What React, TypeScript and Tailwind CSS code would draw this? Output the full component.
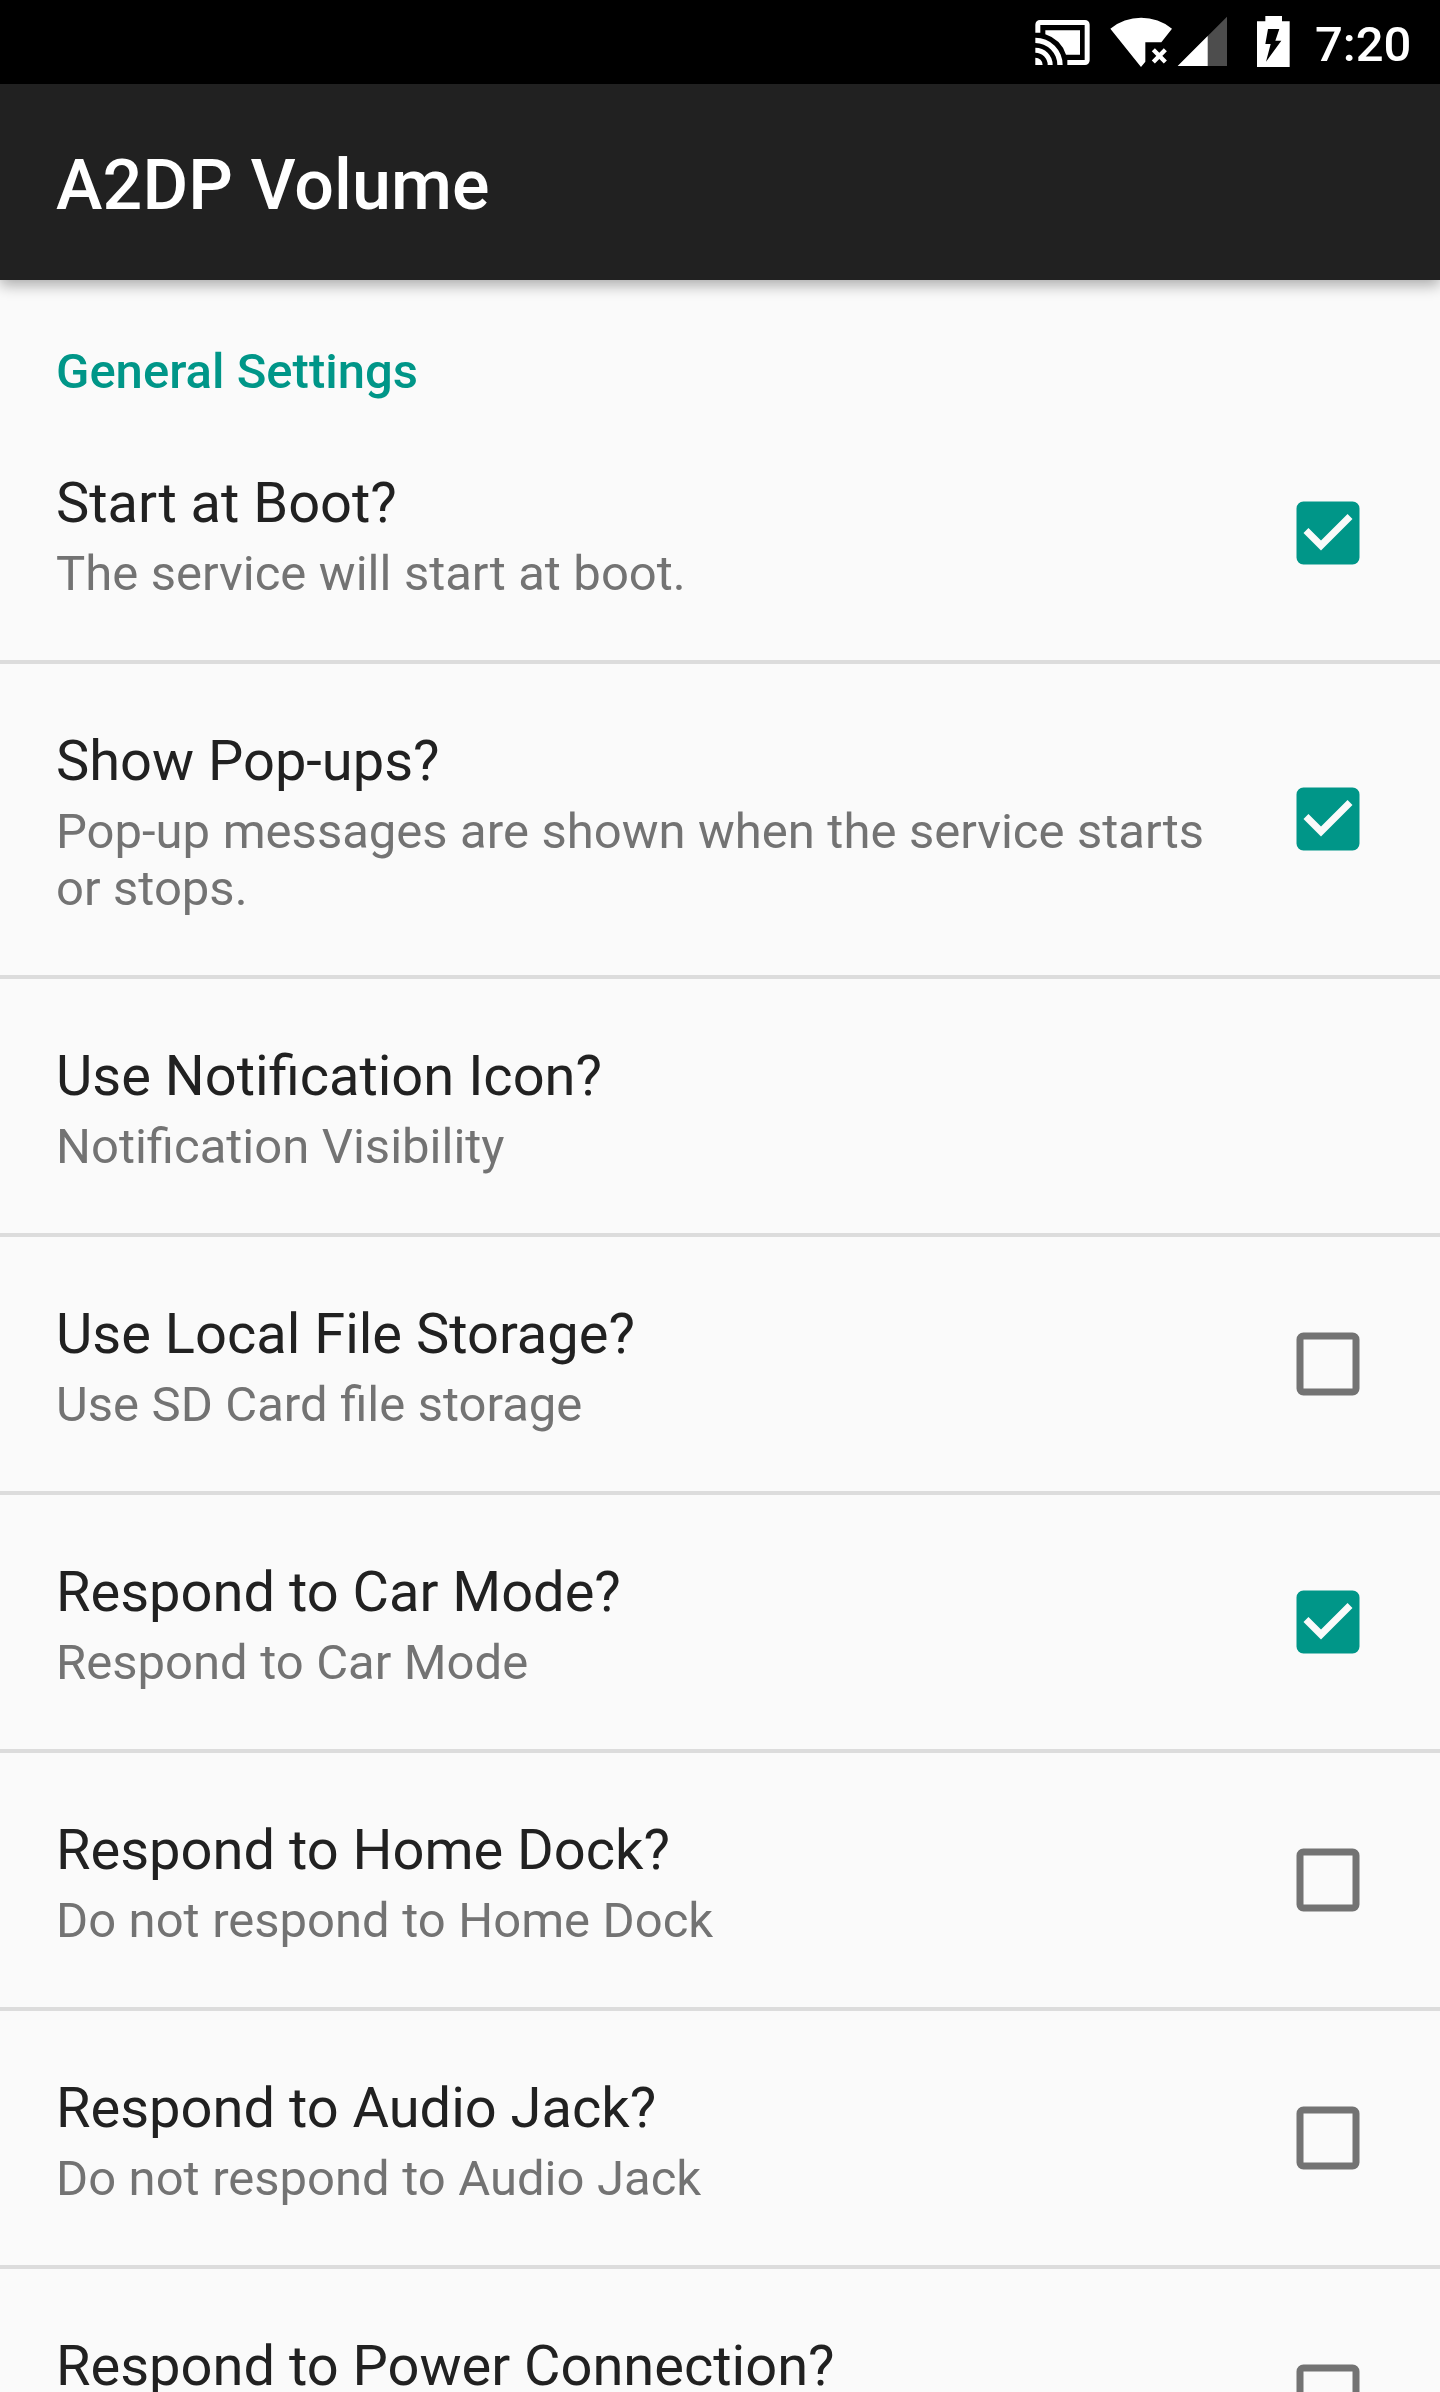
type Setting = { title: string; summary?: string; checked?: boolean };

const settings: Setting[] = [
  { title: "Start at Boot?", summary: "The service will start at boot.", checked: true },
  {
    title: "Show Pop-ups?",
    summary: "Pop-up messages are shown when the service starts or stops.",
    checked: true,
  },
  { title: "Use Notification Icon?", summary: "Notification Visibility" },
  { title: "Use Local File Storage?", summary: "Use SD Card file storage", checked: false },
  { title: "Respond to Car Mode?", summary: "Respond to Car Mode", checked: true },
  { title: "Respond to Home Dock?", summary: "Do not respond to Home Dock", checked: false },
  { title: "Respond to Audio Jack?", summary: "Do not respond to Audio Jack", checked: false },
  { title: "Respond to Power Connection?", checked: false },
];

function CastIcon() {
  return (
    <svg className="mt-5 h-[45px] w-[55px] shrink-0" viewBox="45 60 165 135" fill="#fff">
      <path d="M46 98V74a14 14 0 0 1 14-14h135a14 14 0 0 1 14 14v107a14 14 0 0 1-14 14h-53v-15h52V75H61v23z" />
      <path d="M76 91H180V164H138A97 97 0 0 0 76 103z" />
      <path d="M46 173a22 22 0 0 1 22 22H46z" />
      <path d="M46 143a52 52 0 0 1 52 52H83a37 37 0 0 0-37-37z" />
      <path d="M46 113a82 82 0 0 1 82 82H112a66 66 0 0 0-66-66z" />
    </svg>
  );
}

function WifiOffIcon() {
  return (
    <svg className="ml-5 mt-[17px] h-[51px] w-[63px] shrink-0" viewBox="270 51 189 153" fill="#fff">
      <path d="M363 201L271 86A147 147 0 0 1 456 86L424 127H376V185z" />
      <path d="M400 149L436 186M436 149L400 186" stroke="#fff" strokeWidth="13" />
    </svg>
  );
}

function SignalIcon() {
  return (
    <svg className="ml-1 mt-4 h-[51px] w-[51px] shrink-0" viewBox="471 48 153 153">
      <path d="M473 198L621 50V198z" fill="#4d4d4d" />
      <path d="M473 198L563 108V198z" fill="#fff" />
    </svg>
  );
}

function BatteryIcon() {
  return (
    <svg className="ml-[29px] mt-4 h-[51px] w-[33px] shrink-0" viewBox="111 48 99 153">
      <path d="M111 64H136V48H186V64H209V201H111z" fill="#fff" />
      <path d="M144 87H178L166 122H184L138 185L152 132H136z" fill="#000" />
    </svg>
  );
}

function Checkbox({ checked }: { checked: boolean }) {
  return (
    <svg className="mb-px h-16 w-16 shrink-0" viewBox="2.857 2.857 18.286 18.286">
      {checked ? (
        <path
          fill="#009688"
          d="M19 3H5a2 2 0 0 0-2 2v14a2 2 0 0 0 2 2h14a2 2 0 0 0 2-2V5a2 2 0 0 0-2-2zm-9 14l-5-5 1.41-1.41L10 14.17l7.59-7.59L19 8l-9 9z"
        />
      ) : (
        <path
          fill="#737373"
          d="M19 5v14H5V5h14m0-2H5a2 2 0 0 0-2 2v14a2 2 0 0 0 2 2h14a2 2 0 0 0 2-2V5a2 2 0 0 0-2-2z"
        />
      )}
    </svg>
  );
}

function Row({ title, summary, checked }: Setting) {
  return (
    <li className="flex min-h-[258px] shrink-0 items-center justify-between border-b-4 border-[#dcdcdc] pl-14 pr-20">
      <div className="w-[1184px] self-start pb-[58px] pt-16">
        <div className="whitespace-nowrap text-[56px] leading-[66px] text-[#212121]">{title}</div>
        {summary && (
          <div className="mt-[9px] text-[49px] leading-[57px] text-[#737373] [word-spacing:0.35px]">{summary}</div>
        )}
      </div>
      {checked !== undefined && <Checkbox checked={checked} />}
    </li>
  );
}

export default function App() {
  return (
    <div className="flex h-[2392px] w-[1440px] flex-col overflow-hidden bg-[#fafafa] font-['Roboto',sans-serif]">
      <div className="flex h-[84px] shrink-0 items-start bg-black pl-[1035px]">
        <CastIcon />
        <WifiOffIcon />
        <SignalIcon />
        <BatteryIcon />
        <span className="ml-[25px] mt-4 text-[49px] font-medium leading-[58px] text-white">7:20</span>
      </div>
      <header className="h-[196px] shrink-0 bg-[#212121] pl-14 pt-[60px] shadow-[0_5px_14px_rgba(0,0,0,0.33)]">
        <h1 className="text-[70px] font-medium leading-[82px] tracking-[0.1px] text-white">A2DP Volume</h1>
      </header>
      <h2 className="h-[126px] shrink-0 pl-14 pt-[63px] text-[49px] font-medium leading-[58px] text-[#009688]">
        General Settings
      </h2>
      <ul className="flex flex-col">
        {settings.map((s) => (
          <Row key={s.title} {...s} />
        ))}
      </ul>
    </div>
  );
}
